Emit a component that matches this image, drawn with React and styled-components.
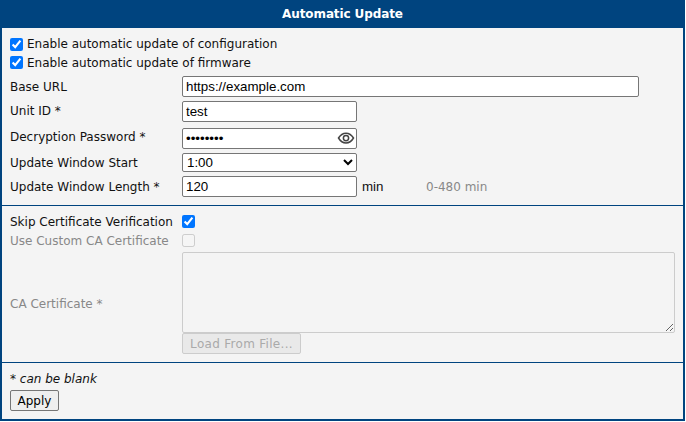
import React from 'react'
import styled, { createGlobalStyle } from 'styled-components'

const GlobalStyle = createGlobalStyle`
  html, body {
    margin: 0;
    background: #fff;
  }
  body {
    font-family: 'DejaVu Sans', Verdana, sans-serif;
    font-size: 12px;
    color: #111;
  }
`

const Panel = styled.form`
  width: 685px;
  height: 421px;
  box-sizing: border-box;
  display: flex;
  flex-direction: column;
  background: #f4f4f4;
  border: solid 2px #00447f;
  border-top: none;
`

const Title = styled.div`
  height: 28px;
  margin: 0 -2px;
  flex: none;
  display: flex;
  align-items: center;
  justify-content: center;
  background: #00447f;
  color: #fff;
  font-size: 12px;
  font-weight: 700;
  letter-spacing: -0.1px;
`

const Section = styled.div`
  display: flex;
  flex-direction: column;
  padding: ${p => p.$padding};
  border-bottom: ${p => (p.$last ? 'none' : 'solid 1px #00447f')};
  flex: ${p => (p.$last ? 1 : 'none')};
`

const CheckLine = styled.label`
  height: 18.5px;
  display: flex;
  align-items: center;
  gap: 4px;
`

const Row = styled.div`
  height: ${p => p.$height}px;
  margin-top: ${p => p.$top || 0}px;
  display: flex;
  align-items: center;
  color: ${p => (p.$disabled ? '#888' : 'inherit')};
`

const Label = styled.label`
  width: 172px;
  flex: none;
  padding-bottom: ${p => p.$lift || 0}px;
  padding-top: ${p => p.$drop || 0}px;
`

const Check = styled.input.attrs({ type: 'checkbox' })`
  width: 13px;
  height: 13px;
  margin: 0;
`

const fieldStyle = `
  box-sizing: border-box;
  height: 21px;
  padding: 1px 3px;
  margin: 0;
  background: #fff;
  border: solid 1px #767676;
  border-radius: 2px;
  font-family: 'Liberation Sans', Arial, sans-serif;
  font-size: 13.33px;
  color: #000;
  outline: none;
`

const Field = styled.input`
  ${fieldStyle}
  width: ${p => p.$width}px;
`

const PasswordBox = styled.div`
  position: relative;
  width: 175px;
  height: 21px;
`

const EyeIcon = styled.svg`
  position: absolute;
  right: 2.5px;
  top: 0.5px;
  width: 18px;
  height: 18px;
`

const Select = styled.select`
  ${fieldStyle}
  width: 175px;
  height: 19px;
  padding: 0;
`

const Unit = styled.span`
  margin-left: 5px;
  width: 64px;
  font-family: 'Liberation Sans', Arial, sans-serif;
  font-size: 13.33px;
`

const Hint = styled.span`
  color: #888;
`

const CaArea = styled.textarea`
  box-sizing: border-box;
  display: block;
  width: 493px;
  height: 81px;
  margin: 0;
  background: #f4f4f4;
  border: solid 1px #ccc;
  border-radius: 2px;
`

const CaColumn = styled.div`
  display: flex;
  flex-direction: column;
  align-items: flex-start;
`

const LoadButton = styled.button`
  box-sizing: border-box;
  width: 119px;
  height: 21px;
  padding: 0;
  background: #e9e9e9;
  border: solid 1px #ccc;
  border-radius: 2px;
  color: #aaa;
  font-family: inherit;
  font-size: 12px;
  letter-spacing: 0.3px;
`

const Note = styled.div`
  height: 19px;
  line-height: 21px;
  font-style: italic;
`

const ApplyButton = styled.button`
  display: block;
  box-sizing: border-box;
  width: 49px;
  height: 21px;
  margin-top: 2px;
  padding: 0;
  background: #efefef;
  border: solid 1px #767676;
  border-radius: 2px;
  color: #000;
  font-family: inherit;
  font-size: 12px;
`

const App = () => (
  <>
    <GlobalStyle />
    <Panel onSubmit={e => e.preventDefault()}>
      <Title>Automatic Update</Title>
      <Section $padding="7px 8px 8px">
        <CheckLine><Check defaultChecked />Enable automatic update of configuration</CheckLine>
        <CheckLine><Check defaultChecked />Enable automatic update of firmware</CheckLine>
        <Row $height={21} $top={4}><Label>Base URL</Label><Field $width={457} defaultValue="https://example.com" /></Row>
        <Row $height={21} $top={4}><Label $lift={2}>Unit ID *</Label><Field $width={175} defaultValue="test" /></Row>
        <Row $height={21} $top={6}>
          <Label $lift={3}>Decryption Password *</Label>
          <PasswordBox>
            <Field $width={175} type="password" defaultValue="password" />
            <EyeIcon viewBox="0 0 24 24" fill="none" stroke="#444" strokeWidth="2">
              <path d="M2 12c2.500-4.200 6-6.500 10-6.500s7.500 2.300 10 6.500c-2.500 4.200-6 6.500-10 6.500S4.500 16.200 2 12z" />
              <circle cx="12" cy="12" r="3.500" />
            </EyeIcon>
          </PasswordBox>
        </Row>
        <Row $height={19} $top={4}>
          <Label>Update Window Start</Label>
          <Select defaultValue="1:00"><option>0:00</option><option>1:00</option><option>2:00</option></Select>
        </Row>
        <Row $height={21} $top={4}>
          <Label>Update Window Length *</Label>
          <Field $width={175} defaultValue="120" />
          <Unit>min</Unit>
          <Hint>0-480 min</Hint>
        </Row>
      </Section>
      <Section $padding="6px 8px 8px">
        <Row $height={19}><Label>Skip Certificate Verification</Label><Check defaultChecked /></Row>
        <Row $height={19} $disabled><Label>Use Custom CA Certificate</Label><Check disabled /></Row>
        <Row $height={102} $top={2} $disabled>
          <Label $drop={2}>CA Certificate *</Label>
          <CaColumn>
            <CaArea disabled />
            <LoadButton type="button" disabled>Load From File...</LoadButton>
          </CaColumn>
        </Row>
      </Section>
      <Section $padding="6px 8px" $last>
        <Note>* can be blank</Note>
        <ApplyButton>Apply</ApplyButton>
      </Section>
    </Panel>
  </>
)

export default App
